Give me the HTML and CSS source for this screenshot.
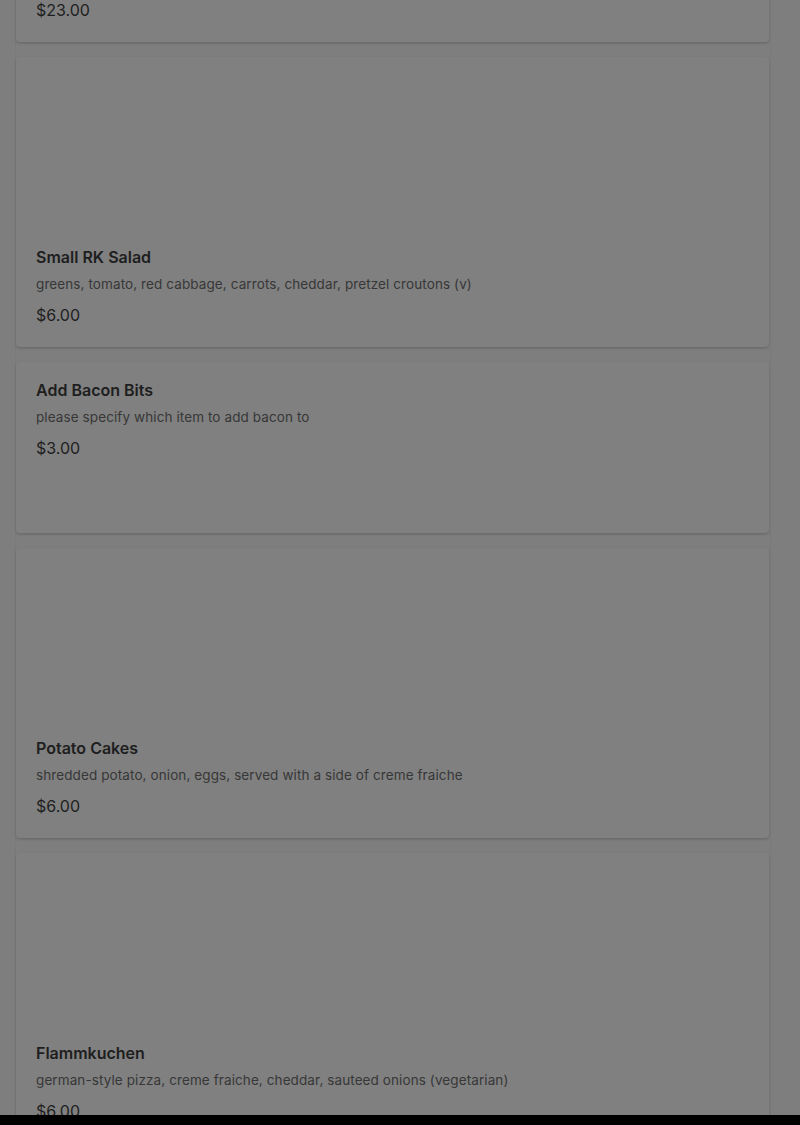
FILE: index.html
```html
<!DOCTYPE html>
<html lang="en">
<head>
<meta charset="utf-8">
<title>Menu</title>
<link rel="stylesheet" href="styles.css">
</head>
<body>
<main class="page">
  <div class="list">
    <article class="card">
      <div class="card-media"></div>
      <div class="card-body">
        <p class="item-price">$23.00</p>
      </div>
    </article>
    <article class="card">
      <div class="card-media"></div>
      <div class="card-body">
        <h3 class="item-name">Small RK Salad</h3>
        <p class="item-desc">greens, tomato, red cabbage, carrots, cheddar, pretzel croutons (v)</p>
        <p class="item-price">$6.00</p>
      </div>
    </article>
    <article class="card card-plain">
      <div class="card-body">
        <h3 class="item-name">Add Bacon Bits</h3>
        <p class="item-desc">please specify which item to add bacon to</p>
        <p class="item-price">$3.00</p>
      </div>
    </article>
    <article class="card">
      <div class="card-media"></div>
      <div class="card-body">
        <h3 class="item-name">Potato Cakes</h3>
        <p class="item-desc">shredded potato, onion, eggs, served with a side of creme fraiche</p>
        <p class="item-price">$6.00</p>
      </div>
    </article>
    <article class="card">
      <div class="card-media"></div>
      <div class="card-body">
        <h3 class="item-name">Flammkuchen</h3>
        <p class="item-desc">german-style pizza, creme fraiche, cheddar, sauteed onions (vegetarian)</p>
        <p class="item-price">$6.00</p>
      </div>
    </article>
  </div>
</main>
<div class="bottom-bar"></div>
</body>
</html>
```
FILE: styles.css
```css
* { box-sizing: border-box; }
html, body {
  margin: 0;
  padding: 0;
  height: 100%;
  overflow: hidden;
  background: #7e7e7e;
}
body {
  font-family: "Inter", "Liberation Sans", sans-serif;
  color: #1f1f1f;
}
.page {
  width: 785px;
  padding: 0 14px 0 15px;
}
.list {
  margin-top: -190px;
  display: flex;
  flex-direction: column;
  gap: 15px;
  border-left: 1px solid #7a7a7a;
  border-right: 1px solid #7a7a7a;
  padding: 0 1px 0 0;
}
.card {
  background: #808080;
  border-radius: 4px;
  box-shadow: 0 1px 3px rgba(0,0,0,0.12), 0 2px 2px rgba(0,0,0,0.06);
  display: flex;
  flex-direction: column;
}
.card-plain { min-height: 171px; }
.card-media { height: 172px; }
.card-body {
  padding: 18px 20px 22px;
}
.item-name {
  margin: 0;
  font-size: 16px;
  line-height: 20px;
  font-weight: 600;
  color: #1e1e1e;
}
.item-desc {
  margin: 7px 0 0;
  font-size: 13.5px;
  line-height: 20px;
  color: #373737;
  letter-spacing: 0.1px;
}
.item-price {
  margin: 11px 0 0;
  font-size: 16px;
  line-height: 20px;
  color: #1e1e1e;
}
.card-body > .item-price:first-child { margin-top: 0; }
.bottom-bar {
  position: fixed;
  left: 0;
  right: 0;
  bottom: 0;
  height: 10px;
  background: #000;
}
```
